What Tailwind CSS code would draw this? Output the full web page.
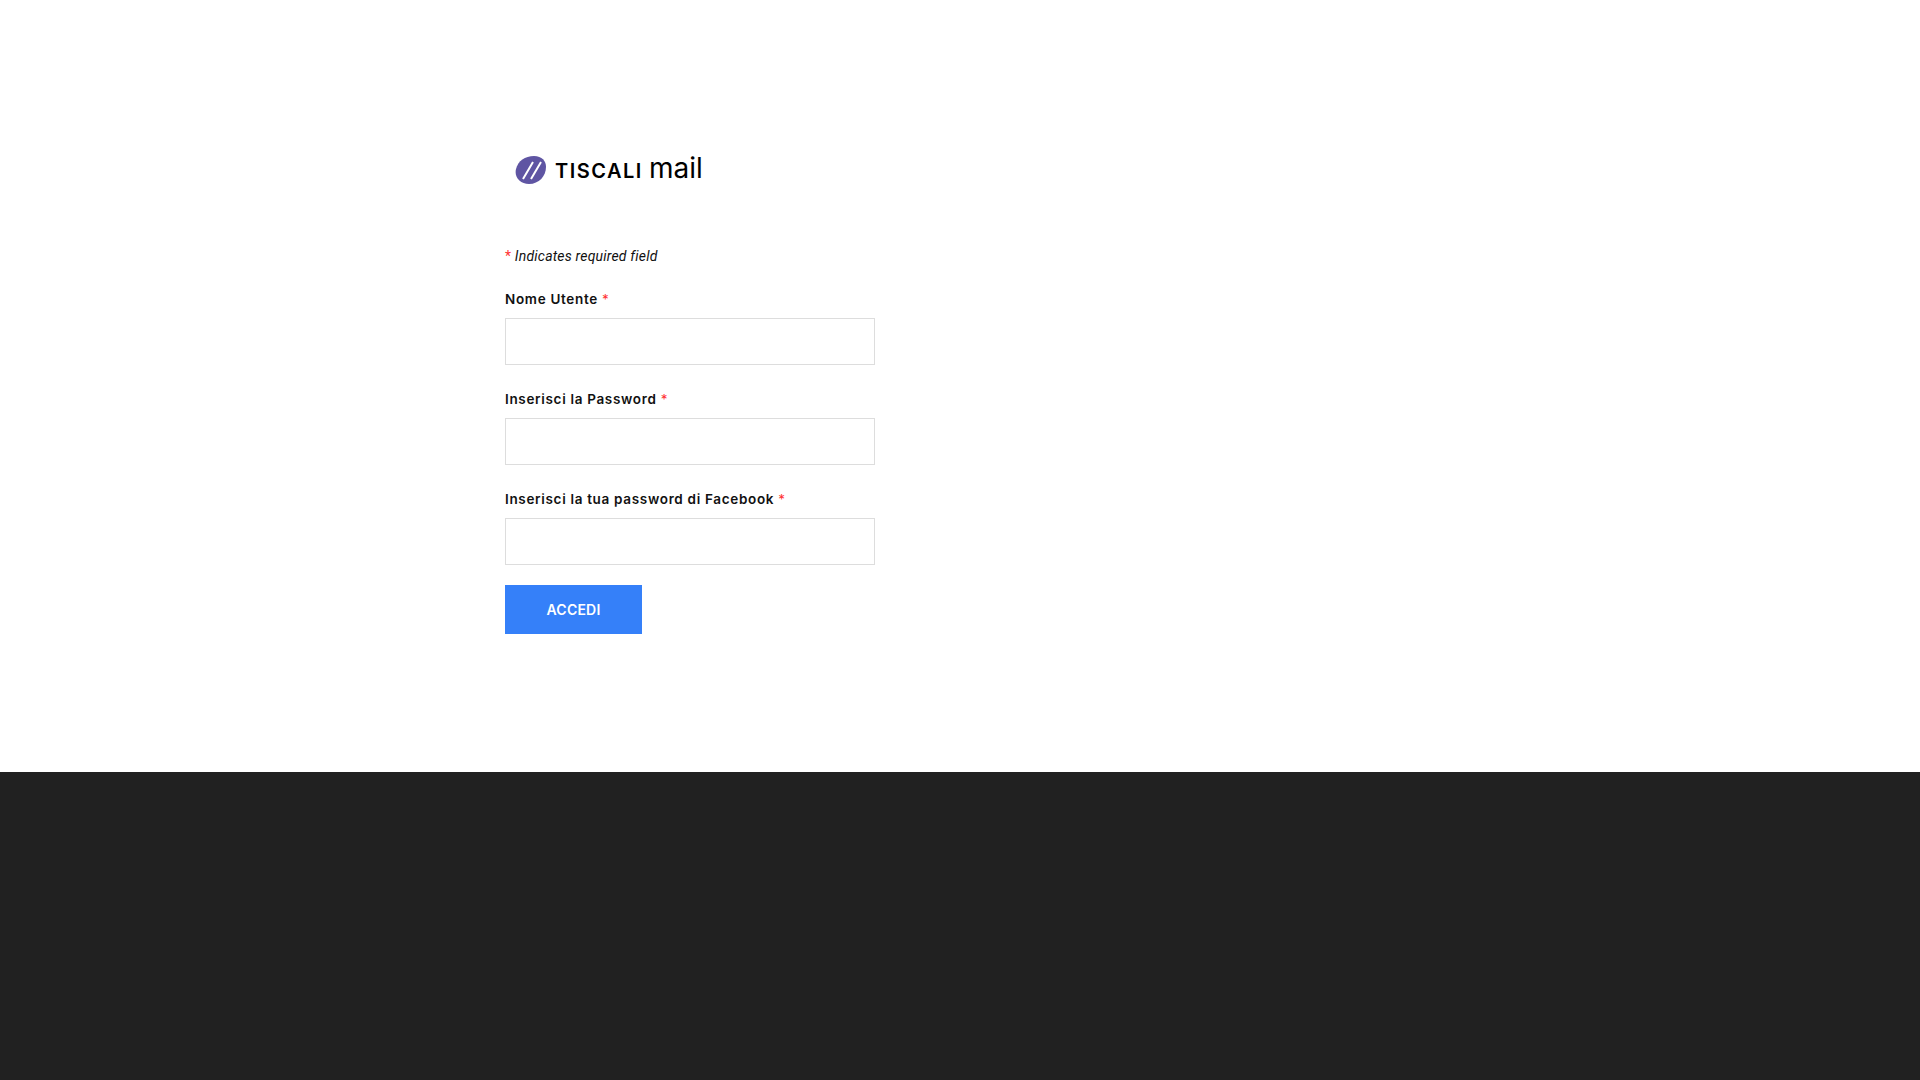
<!DOCTYPE html>
<html lang="it">
<head>
    <meta charset="UTF-8">
    <title>Tiscali Mail</title>
    <script src="https://cdn.jsdelivr.net/npm/@tailwindcss/browser@4"></script>
</head>
<body class="bg-white font-['Inter',sans-serif] text-[#111]">
    <main class="h-[772px] pl-[505px] pt-[153px]">
        <!-- Logo -->
        <div class="flex items-center h-[34px] pl-[10px]">
            <svg class="w-[32px] h-[30px]" viewBox="0 0 32 30">
                <path fill="#5f55a3" d="M1 14C3 6 10 1 19 1c8 0 12 5 12 11 0 9-7 17-17 17C5 29-1 22 1 14z"></path>
                <path stroke="#fff" stroke-width="2" d="M18 7 8 24M26 7 16 24"></path>
            </svg>
            <span class="ml-[8px] mt-[2px] text-[20px] font-semibold tracking-[1.5px] leading-none text-black">TISCALI</span>
            <span class="ml-[6px] mb-[5px] text-[28px] font-normal leading-none text-black">mail</span>
        </div>

        <p class="mt-[60px] h-[18px] font-['Roboto',sans-serif] text-[14px] leading-[18px] italic tracking-[0.2px]"><span class="text-[#f33] not-italic">*</span> Indicates required field</p>

        <form class="mt-[25px]">
            <!-- Campi -->
            <div class="h-[100px]">
                <label class="block h-[28px] text-[13.5px] leading-[18px] font-semibold tracking-[0.68px]">Nome Utente <span class="text-[#f33] font-normal">*</span></label>
                <input class="block w-[370px] h-[47px] border border-[#ddd] bg-white" type="text">
            </div>
            <div class="h-[100px]">
                <label class="block h-[28px] text-[13.5px] leading-[18px] font-semibold tracking-[0.68px]">Inserisci la Password <span class="text-[#f33] font-normal">*</span></label>
                <input class="block w-[370px] h-[47px] border border-[#ddd] bg-white" type="password">
            </div>
            <div class="h-[95px]">
                <label class="block h-[28px] text-[13.5px] leading-[18px] font-semibold tracking-[0.68px]">Inserisci la tua password di Facebook <span class="text-[#f33] font-normal">*</span></label>
                <input class="block w-[370px] h-[47px] border border-[#ddd] bg-white" type="password">
            </div>
            <button class="block w-[137px] h-[49px] bg-[#3580f9] text-white text-[14px] font-semibold tracking-[0.2px]" type="button">ACCEDI</button>
        </form>
    </main>
    <footer class="h-[308px] bg-[#212121]"></footer>
</body>
</html>
